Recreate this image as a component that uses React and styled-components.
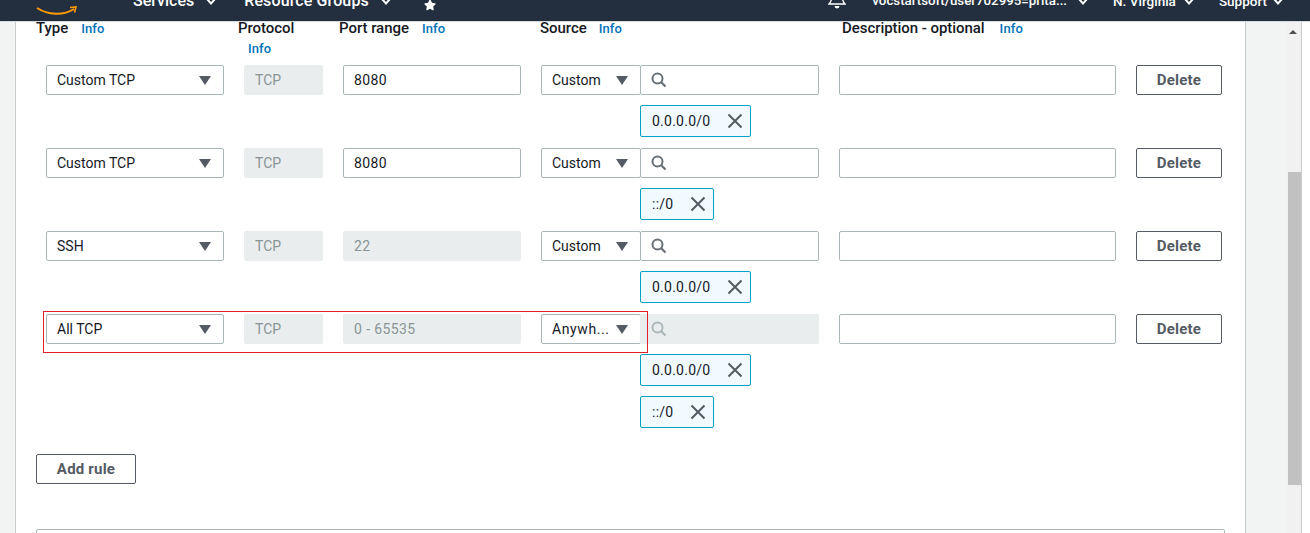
import React from "react";
import styled, { createGlobalStyle } from "styled-components";
import { FaStar } from "react-icons/fa";

const Global = createGlobalStyle`
  html, body { margin: 0; padding: 0; height: 533px; overflow: hidden; background: #fff; }
  body { font-family: Roboto, "Noto Sans", sans-serif; font-size: 14px; color: #16191f; }
  * { box-sizing: border-box; }
`;

const Page = styled.div`
  width: 1310px; height: 533px; display: flex; flex-direction: column; overflow: hidden;
`;
const NavBar = styled.header`
  flex: none; height: 22px; background: #232f3e; border-bottom: 1px solid #d5dbdb;
  position: relative; overflow: hidden; color: #fff; display: flex;
  align-items: flex-end; padding: 0 27px 11px 36px;
`;
const Logo = styled.div`
  width: 42px; height: 30px; flex: none; position: relative; margin-right: 55px;
  font: 700 15px/15px "Liberation Sans", sans-serif; text-align: center;
  svg { position: absolute; left: 0; bottom: -9px; }
`;
const NavItem = styled.span`
  display: inline-flex; align-items: center; gap: ${p => p.$gap ?? 12}px; font-weight: 500;
  font-size: ${p => p.$size ?? 16}px; line-height: 18px; white-space: nowrap;
  margin-left: ${p => p.$ml ?? 0}px; letter-spacing: ${p => p.$ls ?? 0}px;
  svg { flex: none; }
`;
const StarItem = styled(NavItem)` padding-top: 2px; margin-bottom: -1px; `;
const NavSpacer = styled.div` flex: 1; `;
const Main = styled.div` flex: 1; min-height: 0; display: flex; `;
const Gutter = styled.div`
  flex: none; width: ${p => p.$w}px; background: #f2f3f3;
`;
const Panel = styled.section`
  flex: none; width: 1231px; background: #fff; border-left: 1px solid #c9cdcd; border-right: 1px solid #c9cdcd;
  padding-left: 20px; overflow: hidden; position: relative;
`;
const HeadRow = styled.div`
  display: grid; grid-template-columns: 202px 101px 201px 302px 1fr; height: 43px;
`;
const HeadCell = styled.div`
  display: flex; flex-wrap: wrap; column-gap: 13px; align-content: flex-start; padding-right: 20px;
`;
const HeadLabel = styled.span`
  font-weight: 500; font-size: 15px; line-height: 20px; color: #16191f; margin-top: -4px; letter-spacing: -.05px;
`;
const InfoLink = styled.a`
  font-weight: 500; font-size: 13px; line-height: 20px; color: #0073bb; letter-spacing: .1px;
  margin-left: ${p => p.$ml ?? 0}px; margin-top: ${p => p.$mt ?? -3}px;
`;
const RuleGrid = styled.div`
  position: relative; margin-left: 10px; width: 1176px; display: grid;
  grid-template-columns: 178px 79px 178px 100px 158px 277px 86px; column-gap: 20px; align-items: start;
  margin-bottom: 11px;
`;
const Field = styled.div`
  height: 30px; border: 1px solid #aab7b8; border-radius: 2px; background: #fff; display: flex; align-items: center;
  padding: 0 10px; font-size: 14px; color: #16191f; white-space: nowrap; overflow: hidden;
  letter-spacing: ${p => p.$ls ?? 0}px;
`;
const Disabled = styled(Field)`
  background: #eaeded; border-color: #eaeded; color: #879596;
`;
const SelectBox = styled(Field)`
  justify-content: space-between; padding-right: 12px;
`;
const Arrow = styled.span`
  width: 0; height: 0; flex: none; border-left: 6.5px solid transparent; border-right: 6.5px solid transparent;
  border-top: 9px solid #545b64;
`;
const SourceCol = styled.div`
  display: flex; flex-direction: column; gap: 10px; margin-left: -21px; width: 179px;
`;
const Chip = styled.div`
  align-self: flex-start; height: 32px; border: 1px solid #00a1c9; border-radius: 2px; background: #f1faff;
  display: inline-flex; align-items: center; gap: 17px; padding: 0 7px 0 11px; font-size: 14px; color: #16191f;
  letter-spacing: .25px;
`;
const Button = styled.button`
  height: 30px; width: ${p => p.$w}px; border: 1px solid #545b64; border-radius: 2px; background: #fff; color: #545b64;
  font: 700 15px Roboto, sans-serif; letter-spacing: .2px; padding: 0;
`;
const AddRow = styled.div` margin-top: 26px; `;
const NextBox = styled.div`
  margin-top: 45px; width: 1189px; height: 40px; border: 1px solid #aab7b8; border-radius: 2px;
`;
const Highlight = styled.div`
  position: absolute; left: -3px; top: -3px; width: 605px; height: 42px; border: 1px solid #e3202a; pointer-events: none;
`;
const Scrollbar = styled.div`
  flex: none; width: 15px; background: #f1f1f1; border-right: 1px solid #c9cdcd; position: relative;
`;
const ScrollUp = styled.span`
  position: absolute; left: 2px; top: 8px; width: 0; height: 0;
  border-left: 4px solid transparent; border-right: 4px solid transparent; border-bottom: 4px solid #505050;
`;
const Thumb = styled.div`
  position: absolute; left: 1px; top: 150px; width: 13px; height: 313px; background: #c1c1c1;
`;
const Blank = styled.div` flex: 1; background: #fff; `;
const SearchSvg = styled.svg` flex: none; `;

const Chevron = () => (
  <svg width="10" height="7" viewBox="0 0 10 7"><path d="M1 1 5 5.500 9 1" fill="none" stroke="#fff" strokeWidth="2" /></svg>
);
const Search = ({ color = "#687078" }) => (
  <SearchSvg width="16" height="16" viewBox="0 0 16 16">
    <circle cx="6.5" cy="6.5" r="5" fill="none" stroke={color} strokeWidth="2" />
    <path d="M10.2 10.2 14.5 14.5" stroke={color} strokeWidth="2.2" />
  </SearchSvg>
);
const Close = () => (
  <svg width="16" height="16" viewBox="0 0 16 16"><path d="M1.500 1.500 14.500 14.500M14.500 1.500 1.500 14.500" stroke="#545b64" strokeWidth="2" /></svg>
);
const Bell = () => (
  <svg width="18" height="24" viewBox="0 0 18 24">
    <path d="M9 1C5 1 4 4 4 8c0 5-1 8-3 10h16c-2-2-3-5-3-10 0-4-1-7-5-7Z" fill="none" stroke="#fff" strokeWidth="1.400" />
    <path d="M6.500 20a2.500 2.500 0 0 0 5 0Z" fill="#fff" />
  </svg>
);

const Rule = ({ type, port, disabledPort, source, chips, highlight }) => (
  <RuleGrid>
    <SelectBox><span>{type}</span><Arrow /></SelectBox>
    <Disabled>TCP</Disabled>
    {disabledPort ? <Disabled $ls={0.4}>{port}</Disabled> : <Field $ls={0.4}>{port}</Field>}
    <SelectBox $ls={source.startsWith("Any") ? 0.6 : 0}><span>{source}</span><Arrow /></SelectBox>
    <SourceCol>
      {highlight
        ? <Disabled><Search color="#aab7b8" /></Disabled>
        : <Field><Search /></Field>}
      {chips.map(c => <Chip key={c}><span>{c}</span><Close /></Chip>)}
    </SourceCol>
    <Field />
    <Button $w={86}>Delete</Button>
    {highlight && <Highlight />}
  </RuleGrid>
);

export default function App() {
  return (
    <Page>
      <Global />
      <NavBar>
        <Logo>
          aws
          <svg width="42" height="14" viewBox="0 0 42 14">
            <path d="M1 3c11 7 26 8 37 1" fill="none" stroke="#ff9900" strokeWidth="2" />
            <path d="M34 2.500 40 2l-1.500 5.500" fill="none" stroke="#ff9900" strokeWidth="1.600" />
          </svg>
        </Logo>
        <NavItem>Services <Chevron /></NavItem>
        <NavItem $ml={28} $ls={0.12}>Resource Groups <Chevron /></NavItem>
        <StarItem $ml={33}><FaStar size={12} /></StarItem>
        <NavSpacer />
        <NavItem><Bell /></NavItem>
        <NavItem $ml={26} $size={13.300} $gap={11}>vocstartsoft/user702995=prita... <Chevron /></NavItem>
        <NavItem $ml={25} $size={13.500} $gap={8}>N. Virginia <Chevron /></NavItem>
        <NavItem $ml={25} $size={13.500} $gap={6}>Support <Chevron /></NavItem>
      </NavBar>
      <Main>
        <Gutter $w={15} />
        <Panel>
          <HeadRow>
            <HeadCell><HeadLabel>Type</HeadLabel><InfoLink>Info</InfoLink></HeadCell>
            <HeadCell><HeadLabel>Protocol</HeadLabel><InfoLink $ml={10} $mt={1}>Info</InfoLink></HeadCell>
            <HeadCell><HeadLabel>Port range</HeadLabel><InfoLink>Info</InfoLink></HeadCell>
            <HeadCell><HeadLabel>Source</HeadLabel><InfoLink $ml={-1}>Info</InfoLink></HeadCell>
            <HeadCell><HeadLabel>Description - optional</HeadLabel><InfoLink $ml={2}>Info</InfoLink></HeadCell>
          </HeadRow>
          <Rule type="Custom TCP" port="8080" source="Custom" chips={["0.0.0.0/0"]} />
          <Rule type="Custom TCP" port="8080" source="Custom" chips={["::/0"]} />
          <Rule type="SSH" port="22" disabledPort source="Custom" chips={["0.0.0.0/0"]} />
          <Rule type="All TCP" port="0 - 65535" disabledPort source="Anywh..." highlight chips={["0.0.0.0/0", "::/0"]} />
          <AddRow><Button $w={100}>Add rule</Button></AddRow>
          <NextBox />
        </Panel>
        <Gutter $w={41} />
        <Scrollbar><ScrollUp /><Thumb /></Scrollbar>
        <Blank />
      </Main>
    </Page>
  );
}
